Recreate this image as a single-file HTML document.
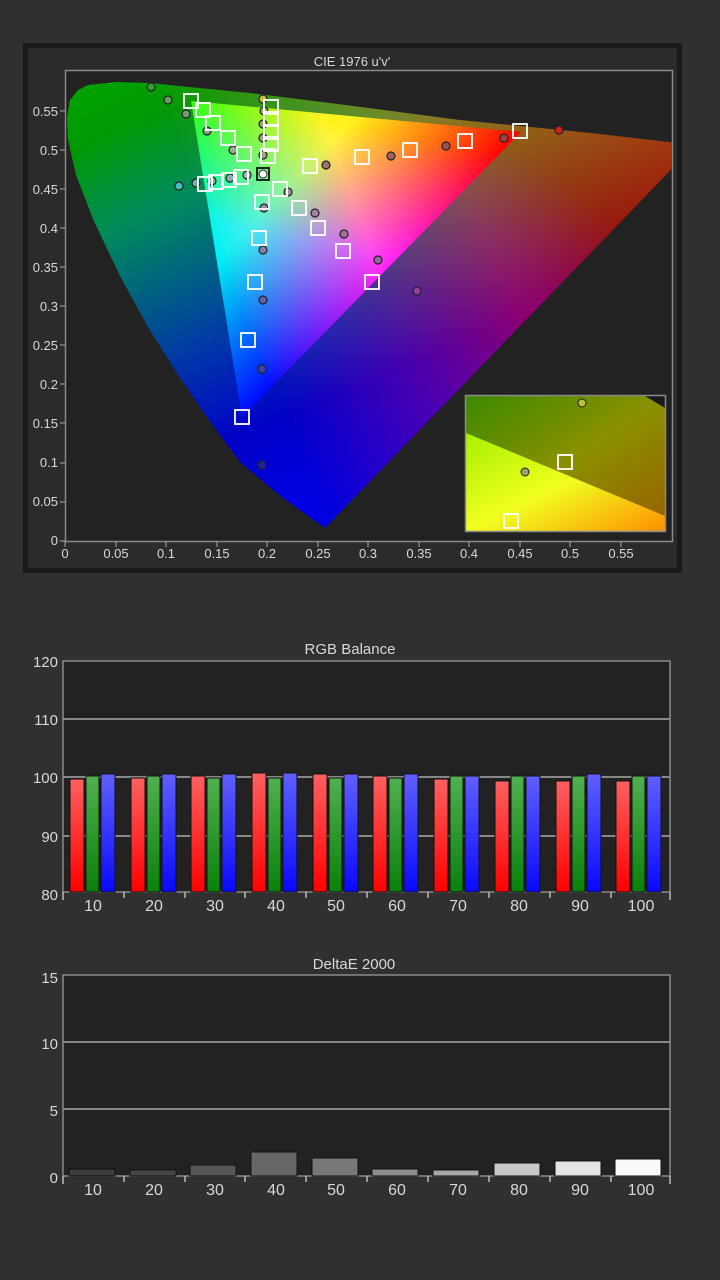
<!DOCTYPE html>
<html><head><meta charset="utf-8"><style>
html,body{margin:0;padding:0;background:#303030;width:720px;height:1280px;overflow:hidden}
svg{display:block}
text{font-family:"Liberation Sans",sans-serif;fill:#d8d8d8}
</style></head><body>
<svg width="720" height="1280" viewBox="0 0 720 1280" xmlns="http://www.w3.org/2000/svg">
<defs>
<clipPath id="plot"><rect x="66" y="71" width="606" height="470"/></clipPath>
<clipPath id="loc"><path d="M325,528 L283,498 L240,462 L211,423 L180,378 L149,329 L120,276 L93,219 L76,175 L68,140 L67,118 L70,100 L78,90 L88,85 L116,82 L150,83 L179,86 L250,93 L330,103 L460,120 L591,133 L695,145 Z"/></clipPath>
<clipPath id="tri"><path d="M521,132 L191,101 L242,417 Z"/></clipPath>
<linearGradient id="oR" gradientUnits="userSpaceOnUse" x1="680" y1="150" x2="250" y2="330"><stop offset="0" stop-color="#a00008"/><stop offset="0.45" stop-color="#8a0010"/><stop offset="1" stop-color="#000"/></linearGradient>
<linearGradient id="oG" gradientUnits="userSpaceOnUse" x1="110" y1="90" x2="260" y2="430"><stop offset="0" stop-color="#00a000"/><stop offset="0.35" stop-color="#008a10"/><stop offset="1" stop-color="#000"/></linearGradient>
<radialGradient id="oB" gradientUnits="userSpaceOnUse" cx="300" cy="520" r="430"><stop offset="0" stop-color="#0000e8"/><stop offset="0.45" stop-color="#0000a8"/><stop offset="0.8" stop-color="#000050"/><stop offset="1" stop-color="#000"/></radialGradient>
<linearGradient id="tR" gradientUnits="userSpaceOnUse" x1="521" y1="132" x2="215" y2="250"><stop offset="0" stop-color="#ff0000"/><stop offset="0.55" stop-color="#ff2020"/><stop offset="1" stop-color="#000"/></linearGradient>
<linearGradient id="tG" gradientUnits="userSpaceOnUse" x1="191" y1="101" x2="380" y2="280"><stop offset="0" stop-color="#00ff00"/><stop offset="0.5" stop-color="#00f000"/><stop offset="1" stop-color="#000"/></linearGradient>
<linearGradient id="tB" gradientUnits="userSpaceOnUse" x1="242" y1="417" x2="300" y2="115"><stop offset="0" stop-color="#0000ff"/><stop offset="0.6" stop-color="#0000f0"/><stop offset="1" stop-color="#000"/></linearGradient>
<linearGradient id="inset" x1="0" y1="0" x2="1" y2="1"><stop offset="0" stop-color="#a8f000"/><stop offset="0.5" stop-color="#f0ff20"/><stop offset="1" stop-color="#ff9000"/></linearGradient>
<linearGradient id="inset2" x1="0" y1="0" x2="1" y2="1"><stop offset="0" stop-color="#3c8a00"/><stop offset="0.5" stop-color="#8a9000"/><stop offset="1" stop-color="#9a6000"/></linearGradient>
<linearGradient id="br" x1="0" y1="0" x2="0" y2="1"><stop offset="0" stop-color="#ff6060"/><stop offset="1" stop-color="#ff0000"/></linearGradient>
<linearGradient id="bg" x1="0" y1="0" x2="0" y2="1"><stop offset="0" stop-color="#50b050"/><stop offset="1" stop-color="#0a800a"/></linearGradient>
<linearGradient id="bb" x1="0" y1="0" x2="0" y2="1"><stop offset="0" stop-color="#6060ff"/><stop offset="1" stop-color="#0808ff"/></linearGradient>
</defs>

<rect x="23" y="43" width="659" height="530" fill="#1b1b1b"/>
<rect x="28" y="48" width="649" height="520" fill="#2b2b2b"/>
<text x="352" y="66" font-size="13" text-anchor="middle">CIE 1976 u'v'</text>
<rect x="65.5" y="70.5" width="607" height="471" fill="#222" stroke="#8a8a8a" stroke-width="1.5"/>
<g clip-path="url(#plot)">
 <g clip-path="url(#loc)" style="isolation:isolate">
  <rect x="60" y="70" width="640" height="480" fill="#000"/>
  <rect x="60" y="70" width="640" height="480" fill="url(#oR)" style="mix-blend-mode:screen"/>
  <rect x="60" y="70" width="640" height="480" fill="url(#oG)" style="mix-blend-mode:screen"/>
  <rect x="60" y="70" width="640" height="480" fill="url(#oB)" style="mix-blend-mode:screen"/>
 </g>
 <g clip-path="url(#tri)" style="isolation:isolate">
  <rect x="180" y="95" width="350" height="330" fill="#000"/>
  <rect x="180" y="95" width="350" height="330" fill="url(#tR)" style="mix-blend-mode:screen"/>
  <rect x="180" y="95" width="350" height="330" fill="url(#tG)" style="mix-blend-mode:screen"/>
  <rect x="180" y="95" width="350" height="330" fill="url(#tB)" style="mix-blend-mode:screen"/>
 </g>
</g>
<g stroke="#222" stroke-width="1.2">
<circle cx="151" cy="87" r="4" fill="#30a030"/>
<circle cx="168" cy="100" r="4" fill="#60a060"/>
<circle cx="186" cy="114" r="4" fill="#70a070"/>
<circle cx="207" cy="131" r="4" fill="#80a080"/>
<circle cx="233" cy="150" r="4" fill="#90b090"/>
<circle cx="179" cy="186" r="4" fill="#40c0c0"/>
<circle cx="196" cy="183" r="4" fill="#70b0b0"/>
<circle cx="212" cy="181" r="4" fill="#80b0b0"/>
<circle cx="230" cy="178" r="4" fill="#90b0b0"/>
<circle cx="247" cy="175" r="4" fill="#a0b8b8"/>
<circle cx="263" cy="99" r="4" fill="#c0c040"/>
<circle cx="264" cy="111" r="4" fill="#a8a860"/>
<circle cx="263" cy="124" r="4" fill="#a0a070"/>
<circle cx="263" cy="138" r="4" fill="#a0a080"/>
<circle cx="263" cy="155" r="4" fill="#a0a088"/>
<circle cx="264" cy="208" r="4" fill="#9090a0"/>
<circle cx="288" cy="192" r="4" fill="#a090a0"/>
<circle cx="315" cy="213" r="4" fill="#a080a0"/>
<circle cx="344" cy="234" r="4" fill="#a070a0"/>
<circle cx="378" cy="260" r="4" fill="#a060a0"/>
<circle cx="417" cy="291" r="4" fill="#9040a0"/>
<circle cx="263" cy="250" r="4" fill="#8080a8"/>
<circle cx="263" cy="300" r="4" fill="#6060b0"/>
<circle cx="262" cy="369" r="4" fill="#4040b0"/>
<circle cx="262" cy="465" r="4" fill="#2020a0"/>
<circle cx="326" cy="165" r="4" fill="#a07070"/>
<circle cx="391" cy="156" r="4" fill="#a06060"/>
<circle cx="446" cy="146" r="4" fill="#a05050"/>
<circle cx="504" cy="138" r="4" fill="#a04040"/>
<circle cx="559" cy="130" r="4" fill="#d02020"/>
</g>
<g fill="none" stroke="#fff" stroke-width="1.8">
<rect x="184" y="94" width="14" height="14"/>
<rect x="196" y="103" width="14" height="14"/>
<rect x="206" y="116" width="14" height="14"/>
<rect x="221" y="131" width="14" height="14"/>
<rect x="237" y="147" width="14" height="14"/>
<rect x="264" y="100" width="14" height="14"/>
<rect x="264" y="112" width="14" height="14"/>
<rect x="264" y="125" width="14" height="14"/>
<rect x="264" y="137" width="14" height="14"/>
<rect x="261" y="149" width="14" height="14"/>
<rect x="198" y="177" width="14" height="14"/>
<rect x="209" y="175" width="14" height="14"/>
<rect x="222" y="173" width="14" height="14"/>
<rect x="234" y="170" width="14" height="14"/>
<rect x="273" y="182" width="14" height="14"/>
<rect x="292" y="201" width="14" height="14"/>
<rect x="311" y="221" width="14" height="14"/>
<rect x="336" y="244" width="14" height="14"/>
<rect x="365" y="275" width="14" height="14"/>
<rect x="255" y="195" width="14" height="14"/>
<rect x="252" y="231" width="14" height="14"/>
<rect x="248" y="275" width="14" height="14"/>
<rect x="241" y="333" width="14" height="14"/>
<rect x="235" y="410" width="14" height="14"/>
<rect x="303" y="159" width="14" height="14"/>
<rect x="355" y="150" width="14" height="14"/>
<rect x="403" y="143" width="14" height="14"/>
<rect x="458" y="134" width="14" height="14"/>
<rect x="513" y="124" width="14" height="14"/>
</g>
<rect x="257" y="168" width="12" height="12" fill="none" stroke="#111" stroke-width="1.8"/>
<circle cx="263" cy="174" r="4" fill="#fff" stroke="#222"/>
<g>
<rect x="466" y="396" width="199" height="135" fill="url(#inset2)"/>
<path d="M466,433 L665,516 L665,531 L466,531 Z" fill="url(#inset)"/>
<path d="M645,396 L665,396 L665,408 Z" fill="#1a1a1a"/>
<rect x="465.5" y="395.5" width="200" height="136" fill="none" stroke="#8a8a8a" stroke-width="1.5"/>
<circle cx="582" cy="403" r="4" fill="#c0c030" stroke="#222"/>
<circle cx="525" cy="472" r="4" fill="#a0a060" stroke="#222"/>
<rect x="558" y="455" width="14" height="14" fill="none" stroke="#fff" stroke-width="1.8"/>
<rect x="504" y="514" width="14" height="14" fill="none" stroke="#fff" stroke-width="1.8"/>
</g>
<g font-size="13" text-anchor="end">
<text x="58" y="116">0.55</text><text x="58" y="155">0.5</text><text x="58" y="194">0.45</text><text x="58" y="233">0.4</text><text x="58" y="272">0.35</text><text x="58" y="311">0.3</text><text x="58" y="350">0.25</text><text x="58" y="389">0.2</text><text x="58" y="428">0.15</text><text x="58" y="467">0.1</text><text x="58" y="506">0.05</text><text x="58" y="545">0</text>
</g>
<g stroke="#aaa" stroke-width="1">
<path d="M60,111H65M60,150H65M60,189H65M60,228H65M60,267H65M60,306H65M60,345H65M60,384H65M60,423H65M60,463H65M60,502H65M60,541H65"/>
<path d="M65,541V547M116,541V547M166,541V547M217,541V547M267,541V547M318,541V547M368,541V547M419,541V547M469,541V547M520,541V547M570,541V547M621,541V547"/>
</g>
<g font-size="13" text-anchor="middle">
<text x="65" y="558">0</text><text x="116" y="558">0.05</text><text x="166" y="558">0.1</text><text x="217" y="558">0.15</text><text x="267" y="558">0.2</text><text x="318" y="558">0.25</text><text x="368" y="558">0.3</text><text x="419" y="558">0.35</text><text x="469" y="558">0.4</text><text x="520" y="558">0.45</text><text x="570" y="558">0.5</text><text x="621" y="558">0.55</text>
</g>

<text x="350" y="654" font-size="15" text-anchor="middle">RGB Balance</text>
<rect x="63" y="661" width="607" height="231" fill="#222" stroke="#8a8a8a" stroke-width="1.5"/>
<g stroke="#888" stroke-width="2"><path d="M63,719H670M63,777H670M63,836H670"/></g>
<g font-size="15" text-anchor="end">
<text x="58" y="667">120</text><text x="58" y="725">110</text><text x="58" y="783">100</text><text x="58" y="842">90</text><text x="58" y="900">80</text>
</g>
<g stroke="#111" stroke-width="1">
<rect x="70" y="779" width="14" height="113" fill="url(#br)"/><rect x="86" y="776" width="13" height="116" fill="url(#bg)"/><rect x="101" y="774" width="14" height="118" fill="url(#bb)"/>
<rect x="131" y="778" width="14" height="114" fill="url(#br)"/><rect x="147" y="776" width="13" height="116" fill="url(#bg)"/><rect x="162" y="774" width="14" height="118" fill="url(#bb)"/>
<rect x="191" y="776" width="14" height="116" fill="url(#br)"/><rect x="207" y="778" width="13" height="114" fill="url(#bg)"/><rect x="222" y="774" width="14" height="118" fill="url(#bb)"/>
<rect x="252" y="773" width="14" height="119" fill="url(#br)"/><rect x="268" y="778" width="13" height="114" fill="url(#bg)"/><rect x="283" y="773" width="14" height="119" fill="url(#bb)"/>
<rect x="313" y="774" width="14" height="118" fill="url(#br)"/><rect x="329" y="778" width="13" height="114" fill="url(#bg)"/><rect x="344" y="774" width="14" height="118" fill="url(#bb)"/>
<rect x="373" y="776" width="14" height="116" fill="url(#br)"/><rect x="389" y="778" width="13" height="114" fill="url(#bg)"/><rect x="404" y="774" width="14" height="118" fill="url(#bb)"/>
<rect x="434" y="779" width="14" height="113" fill="url(#br)"/><rect x="450" y="776" width="13" height="116" fill="url(#bg)"/><rect x="465" y="776" width="14" height="116" fill="url(#bb)"/>
<rect x="495" y="781" width="14" height="111" fill="url(#br)"/><rect x="511" y="776" width="13" height="116" fill="url(#bg)"/><rect x="526" y="776" width="14" height="116" fill="url(#bb)"/>
<rect x="556" y="781" width="14" height="111" fill="url(#br)"/><rect x="572" y="776" width="13" height="116" fill="url(#bg)"/><rect x="587" y="774" width="14" height="118" fill="url(#bb)"/>
<rect x="616" y="781" width="14" height="111" fill="url(#br)"/><rect x="632" y="776" width="13" height="116" fill="url(#bg)"/><rect x="647" y="776" width="14" height="116" fill="url(#bb)"/>
</g>
<g stroke="#bbb" stroke-width="1.5"><path d="M63,892V900M124,892V898M185,892V898M245,892V898M306,892V898M367,892V898M428,892V898M489,892V898M550,892V898M611,892V898M670,892V900"/></g>
<g font-size="16" text-anchor="middle">
<text x="93" y="911">10</text><text x="154" y="911">20</text><text x="215" y="911">30</text><text x="276" y="911">40</text><text x="336" y="911">50</text><text x="397" y="911">60</text><text x="458" y="911">70</text><text x="519" y="911">80</text><text x="580" y="911">90</text><text x="641" y="911">100</text>
</g>

<text x="354" y="969" font-size="15" text-anchor="middle">DeltaE 2000</text>
<rect x="63" y="975" width="607" height="201" fill="#222" stroke="#8a8a8a" stroke-width="1.5"/>
<g stroke="#888" stroke-width="2"><path d="M63,1042H670M63,1109H670"/></g>
<g font-size="15" text-anchor="end">
<text x="58" y="983">15</text><text x="58" y="1049">10</text><text x="58" y="1116">5</text><text x="58" y="1183">0</text>
</g>
<g stroke="#111" stroke-width="1">
<rect x="69" y="1169" width="46" height="7" fill="#3c3c3c"/>
<rect x="130" y="1170" width="46" height="6" fill="#464646"/>
<rect x="190" y="1165" width="46" height="11" fill="#555"/>
<rect x="251" y="1152" width="46" height="24" fill="#666"/>
<rect x="312" y="1158" width="46" height="18" fill="#787878"/>
<rect x="372" y="1169" width="46" height="7" fill="#8c8c8c"/>
<rect x="433" y="1170" width="46" height="6" fill="#a8a8a8"/>
<rect x="494" y="1163" width="46" height="13" fill="#c8c8c8"/>
<rect x="555" y="1161" width="46" height="15" fill="#e4e4e4"/>
<rect x="615" y="1159" width="46" height="17" fill="#fafafa"/>
</g>
<g stroke="#bbb" stroke-width="1.5"><path d="M63,1176V1184M124,1176V1182M185,1176V1182M245,1176V1182M306,1176V1182M367,1176V1182M428,1176V1182M489,1176V1182M550,1176V1182M611,1176V1182M670,1176V1184"/></g>
<g font-size="16" text-anchor="middle">
<text x="93" y="1195">10</text><text x="154" y="1195">20</text><text x="215" y="1195">30</text><text x="276" y="1195">40</text><text x="336" y="1195">50</text><text x="397" y="1195">60</text><text x="458" y="1195">70</text><text x="519" y="1195">80</text><text x="580" y="1195">90</text><text x="641" y="1195">100</text>
</g>
</svg>
</body></html>
